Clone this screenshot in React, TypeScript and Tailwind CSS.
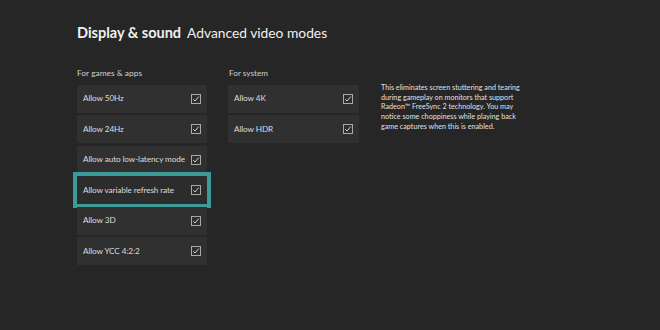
import React from "react";

const Check = () => (
  <div className="w-[10px] h-[10px] border border-[#a8a8a8] flex items-center justify-center">
    <svg width="8" height="8" viewBox="0 0 8 8" fill="none">
      <path d="M1.3 4.3 L3 6 L6.8 1.6" stroke="#d0d0d0" strokeWidth="1" />
    </svg>
  </div>
);

const Tile = ({ label, focused }: { label: string; focused?: boolean }) => (
  <div
    className={
      "h-[28px] flex items-center justify-between pl-[6px] pr-[6px] " +
      (focused ? "bg-[#2c2c2c] shadow-[0_0_0_4px_#3b9b99]" : "bg-[#303030]")
    }
  >
    <span className="text-[8.2px] tracking-[-0.1px] text-[#dcdcdc] leading-none whitespace-nowrap">{label}</span>
    <Check />
  </div>
);

export default function App() {
  return (
    <div
      className="w-[660px] h-[330px] bg-[#262626] overflow-hidden"
      style={{ fontFamily: 'Lato, "Open Sans", sans-serif' }}
    >
      <div className="pl-[77px] pt-[23px]">
        <div className="flex items-center gap-[6px] h-[20px] text-[#f0f0f0]">
          <span className="font-bold text-[14.5px]">Display &amp; sound</span>
          <span className="text-[13.8px]">Advanced video modes</span>
        </div>
        <div className="flex mt-[24px]">
          <div className="w-[130px]">
            <div className="h-[12px] leading-[12px] text-[8.4px] text-[#d0d0d0] mb-[5.5px]">For games &amp; apps</div>
            <div className="flex flex-col gap-[2.5px]">
              <Tile label="Allow 50Hz" />
              <Tile label="Allow 24Hz" />
              <Tile label="Allow auto low-latency mode" />
              <Tile label="Allow variable refresh rate" focused />
              <Tile label="Allow 3D" />
              <Tile label="Allow YCC 4:2:2" />
            </div>
          </div>
          <div className="w-[131px] ml-[21px]">
            <div className="h-[12px] leading-[12px] text-[8.2px] text-[#d0d0d0] mb-[5.5px] pl-[1px]">For system</div>
            <div className="flex flex-col gap-[2.5px]">
              <Tile label="Allow 4K" />
              <Tile label="Allow HDR" />
            </div>
          </div>
          <div className="ml-[22px] pt-[16px] w-[160px]">
            <p className="text-[7.2px] leading-[9.7px] text-[#e0e0e0] whitespace-nowrap">
              This eliminates screen stuttering and tearing
              <br />
              during gameplay on monitors that support
              <br />
              Radeon™ FreeSync 2 technology. You may
              <br />
              notice some choppiness while playing back
              <br />
              game captures when this is enabled.
            </p>
          </div>
        </div>
      </div>
    </div>
  );
}
